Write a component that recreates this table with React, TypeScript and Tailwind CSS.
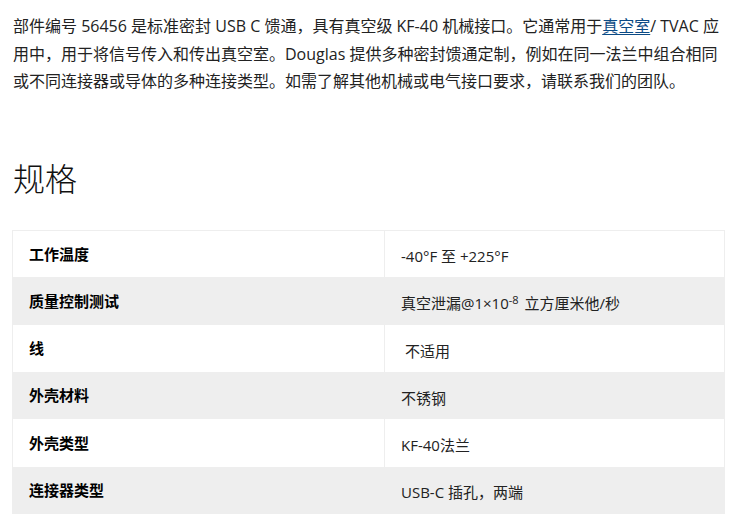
const specs: { label: string; value: React.ReactNode; pad?: boolean }[] = [
  { label: '工作温度', value: '-40°F 至 +225°F' },
  {
    label: '质量控制测试',
    value: (
      <>
        真空泄漏@1×10<sup className="text-[11px] relative -top-[5px] mr-[2px]">-8</sup> 立方厘米他/秒
      </>
    ),
  },
  { label: '线', value: '不适用', pad: true },
  { label: '外壳材料', value: '不锈钢' },
  { label: '外壳类型', value: 'KF-40法兰' },
  { label: '连接器类型', value: 'USB-C 插孔，两端' },
];

export default function App() {
  return (
    <div
      className="w-[749px] h-[527px] bg-white pl-3 pr-6 pt-[13px] overflow-hidden text-[#222]"
      style={{ fontFamily: '"Open Sans", "Noto Sans CJK SC", sans-serif' }}
    >
      <p className="text-[16px] leading-[27.5px] pl-px">
        部件编号 56456 是标准密封 USB C 馈通，具有真空级 KF-40 机械接口。它通常用于
        <a className="text-[#0b4a85] underline underline-offset-2">真空室</a>/ TVAC 应用中，用于将信号传入和传出真空室。Douglas
        提供多种密封馈通定制，例如在同一法兰中组合相同或不同连接器或导体的多种连接类型。如需了解其他机械或电气接口要求，请联系我们的团队。
      </p>

      <h2 className="mt-[61px] text-[32px] leading-[44px] font-light pl-px text-[#111]">规格</h2>

      <table className="mt-[29px] w-[713px] border-collapse border border-[#eeeeee] text-[15px]">
        <tbody>
          {specs.map((s, i) => (
            <tr key={s.label} className={i % 2 === 1 ? 'bg-[#eeeeee] h-[47.33px]' : 'bg-white h-[47.33px]'}>
              <td className="w-[372px] border-r border-[#eeeeee] px-4 font-bold text-black align-middle">
                {s.label}
              </td>
              <td className={`px-4 pt-[5px] align-middle ${s.pad ? 'pl-5' : ''}`}>{s.value}</td>
            </tr>
          ))}
        </tbody>
      </table>
    </div>
  );
}
